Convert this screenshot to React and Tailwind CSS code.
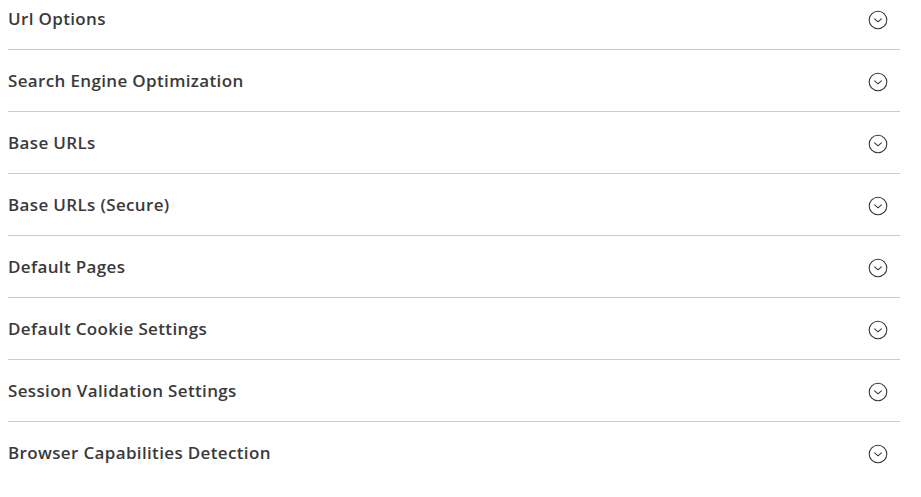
const SECTIONS = [
  'Url Options',
  'Search Engine Optimization',
  'Base URLs',
  'Base URLs (Secure)',
  'Default Pages',
  'Default Cookie Settings',
  'Session Validation Settings',
  'Browser Capabilities Detection',
]

function ChevronCircle() {
  return (
    <svg width="20" height="20" viewBox="0 0 20 20" fill="none" stroke="#41362f" strokeWidth="1.1">
      <circle cx="10" cy="10" r="8.8" />
      <path d="M6.6 8.9 L10 11.8 L13.4 8.9" strokeLinecap="round" strokeLinejoin="round" />
    </svg>
  )
}

export default function App() {
  return (
    <div className="min-h-[497px] bg-white overflow-hidden" style={{ fontFamily: '"Open Sans", sans-serif' }}>
      <div className="mx-2 w-[892px] -mt-[12px]">
        {SECTIONS.map((title, i) => (
          <div
            key={title}
            className={`flex items-center justify-between h-[62px] ${i < SECTIONS.length - 1 ? 'border-b border-[#cccccc]' : ''}`}
          >
            <span className="text-[17px] font-semibold text-[#3a3a3a] tracking-[0.35px]">{title}</span>
            <span className="mr-[12px] mt-[2px] flex items-center">
              <ChevronCircle />
            </span>
          </div>
        ))}
      </div>
    </div>
  )
}
